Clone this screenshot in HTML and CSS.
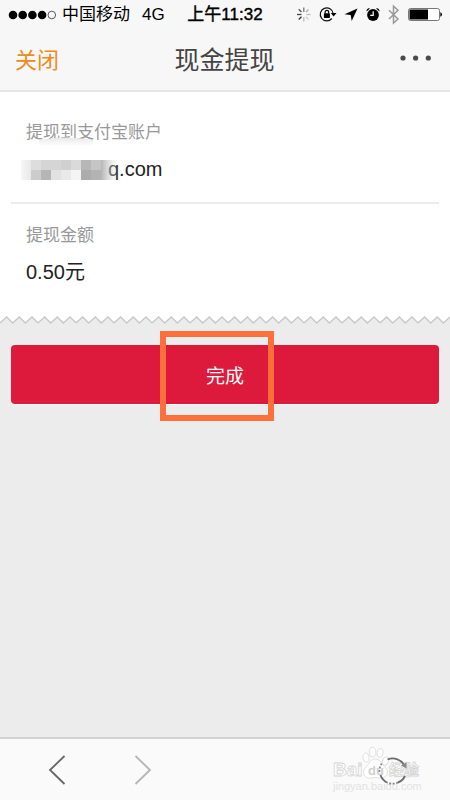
FILE: index.html
```html
<!DOCTYPE html>
<html lang="zh-CN">
<head>
<meta charset="utf-8">
<meta name="viewport" content="width=device-width, initial-scale=1">
<title>现金提现</title>
<link rel="stylesheet" href="styles.css">
</head>
<body>
<div class="screen">
  <div class="status">
    <div class="status-left">
      <svg class="signal" width="48" height="12" viewBox="0 0 48 12" aria-hidden="true">
        <circle cx="5" cy="6" r="4.3"/><circle cx="14.7" cy="6" r="4.3"/><circle cx="24.4" cy="6" r="4.3"/><circle cx="34.1" cy="6" r="4.3"/>
        <circle cx="43.8" cy="6" r="3.8" fill="none" stroke="#333" stroke-width=".8"/>
      </svg>
      <span class="carrier">中国移动</span>
      <span>4G</span>
    </div>
    <span class="clock">上午11:32</span>
    <svg class="status-icons" width="148" height="22" viewBox="294 4 148 22" aria-hidden="true">
      <g stroke-width="1.3" fill="none">
        <path d="M303.800 7.500v4.500" stroke="#777"/><path d="M306 12l2.500-2.500" stroke="#aaa"/><path d="M306.500 14.500h4" stroke="#bbb"/><path d="M306 17l2.500 2.500" stroke="#ccc"/><path d="M303.800 17v4.500" stroke="#bbb"/><path d="M301.500 16.700l-2.800 2.800" stroke="#333"/><path d="M297 14.500h4.500" stroke="#444"/><path d="M301.500 12l-2.800-2.800" stroke="#555"/>
      </g>
      <path d="M331.800 18.500a6.500 6.500 0 1 1 1.400-5" fill="none" stroke="#111" stroke-width="1.200"/>
      <path d="M330.800 13h5.700l-2.900 3.400z"/>
      <rect x="323.900" y="13.200" width="6" height="4.800" rx=".6"/><path d="M325.100 13.500v-1.300a1.800 1.800 0 0 1 3.600 0v1.300" fill="none" stroke="#000" stroke-width="1.200"/>
      <path d="M357.500 8.500l-5.800 12.500-1-6-6.200-.8z"/>
      <circle cx="373" cy="15" r="5.900"/><path d="M366.600 11.500a2.500 2.500 0 0 1 3.400-3zM379.400 11.500a2.500 2.500 0 0 0-3.400-3z"/>
      <path d="M373.200 11.300v4h-3" fill="none" stroke="#fff" stroke-width="1.200"/>
      <path d="M389 10.200l9 8.800-4.500 4V6.200l4.500 4-9 8.800" fill="none" stroke="#999" stroke-width="1.500"/>
      <rect x="408.500" y="8.500" width="31" height="12" rx="2" fill="#fff" stroke="#777"/>
      <rect x="409.500" y="9.500" width="18.500" height="10"/><path d="M440.300 12.300q1.700.3 1.700 2.200t-1.700 2.200z"/>
    </svg>
  </div>
  <header class="header">
    <a class="close" href="#">关闭</a>
    <h1>现金提现</h1>
    <button class="more" type="button" aria-label="更多">
      <svg width="34" height="8" viewBox="0 0 34 8" fill="#4a4a4a"><circle cx="3" cy="4" r="2.600"/><circle cx="15.600" cy="4" r="2.600"/><circle cx="28.300" cy="4" r="2.600"/></svg>
    </button>
  </header>
  <main>
    <dl class="receipt">
      <div class="row account">
        <dt>提现到支付宝账户</dt>
        <dd>q.com</dd>
        <svg class="mosaic" width="104" height="54" viewBox="0 0 104 54" aria-hidden="true">
          <defs>
            <linearGradient id="fade"><stop offset="0" stop-color="#fff" stop-opacity=".6"/><stop offset=".1" stop-color="#fff" stop-opacity="0"/><stop offset="1" stop-color="#fff" stop-opacity="0"/></linearGradient>
            <linearGradient id="edge"><stop offset="0" stop-color="#b5b5b5"/><stop offset="1" stop-color="#ddd" stop-opacity="0"/></linearGradient>
            <linearGradient id="smudge" x1="0" y1="1" x2="0" y2="0"><stop offset="0" stop-color="#fff"/><stop offset="1" stop-color="#e8e8e8"/></linearGradient>
          </defs>
          <path d="M18 14q28-5 54 0v6H18z" fill="url(#smudge)"/>
          <g shape-rendering="crispEdges">
            <path d="M0 34h10v10H0z" fill="#e9e9e9"/><path d="M10 34h10v10H10z" fill="#ddd"/><path d="M20 34h20v10H20z" fill="#d5d5d5"/><path d="M40 34h10v10H40z" fill="#d0d0d0"/><path d="M50 34h10v10H50z" fill="#dadada"/><path d="M60 34h10v10H60z" fill="#b7b7b7"/><path d="M70 34h10v10H70z" fill="#c5c5c5"/>
            <path d="M0 44h10v10H0z" fill="#e9e9e9"/><path d="M10 44h10v10H10z" fill="#ccc"/><path d="M20 44h10v10H20z" fill="#b5b5b5"/><path d="M30 44h10v10H30z" fill="#e1e1e1"/><path d="M40 44h10v10H40z" fill="#e9e9e9"/><path d="M50 44h10v10H50z" fill="#f4f4f4"/><path d="M60 44h10v10H60z" fill="#acacac"/><path d="M70 44h10v10H70z" fill="#b3b3b3"/>
          </g>
          <path d="M80 34h18v20H80z" fill="url(#edge)"/>
          <path d="M0 34h98v20H0z" fill="url(#fade)"/>
        </svg>
      </div>
      <div class="row">
        <dt>提现金额</dt>
        <dd>0.50元</dd>
      </div>
    </dl>
    <svg class="teeth" width="100%" height="8" aria-hidden="true">
      <defs><pattern id="zigzag" width="38" height="8" patternUnits="userSpaceOnUse">
        <path d="M0 0H38V7L32 1 25.330 7 19.330 1 12.670 7 6.670 1 0 7z" fill="#fff"/>
        <path d="M0 7L6.670 1 12.670 7 19.330 1 25.330 7 32 1 38 7" fill="none" stroke="#c8c8c8" stroke-width="1.400"/>
      </pattern></defs>
      <rect width="100%" height="8" fill="url(#zigzag)"/>
    </svg>
    <div class="action">
      <button class="done" type="button">完成</button>
      <span class="highlight"></span>
    </div>
  </main>
  <nav class="toolbar">
    <div class="history">
      <button type="button" aria-label="后退"><svg width="18" height="32" viewBox="0 0 18 32"><path d="M16.500 2L2 16l14.500 14" fill="none" stroke="#666" stroke-width="1.800"/></svg></button>
      <button type="button" aria-label="前进"><svg width="18" height="32" viewBox="0 0 18 32"><path d="M1.500 2L16 16 1.500 30" fill="none" stroke="#b5b5b5" stroke-width="1.800"/></svg></button>
    </div>
    <button class="reload" type="button" aria-label="刷新">
      <svg width="90" height="48" viewBox="0 0 90 48">
        <g fill="#fff" stroke="#ddd" stroke-width=".9">
          <ellipse cx="34" cy="11.500" rx="3" ry="4.500" transform="rotate(-8 34 11.500)"/><ellipse cx="40.500" cy="6" rx="3.300" ry="4.800"/><ellipse cx="48" cy="7" rx="3" ry="4.600" transform="rotate(12 48 7)"/><ellipse cx="53.500" cy="15" rx="3" ry="4.200" transform="rotate(25 53.500 15)"/>
          <path d="M43 13c-5 0-6 5-9 8-5 5-2 12 5 11q4-1 8 0c8 1 11-6 6-11-4-4-5-8-10-8z"/>
        </g>
        <g class="watermark"><text x="1" y="30" font-size="19">Bai</text><text x="57" y="29" font-size="15">经验</text></g>
        <text class="watermark-du" x="36" y="29">du</text>
        <text class="watermark-url" x="1" y="44">jingyan.baidu.com</text>
        <path d="M55.500 13.500A13 13 0 0 1 72 19M73 30A13 13 0 0 1 66 36.500M55 36.500A13 13 0 0 1 48.500 29" fill="none" stroke="#6c6c6c" stroke-width="1.900"/>
        <path d="M66 36.500A13 13 0 0 1 55 36.500M47.500 26A13 13 0 0 1 50 17" fill="none" stroke="#888" stroke-width="1.800" stroke-dasharray="2 1.500"/>
        <path d="M69 19.500l5.500-3v6z" fill="#888"/>
      </svg>
    </button>
  </nav>
</div>
</body>
</html>
```

FILE: styles.css
```css
* {
  box-sizing: border-box;
}

body {
  margin: 0;
  background: #ececec;
  color: #222;
  font-family: "Liberation Sans", "Noto Sans CJK SC", sans-serif;
}

button {
  padding: 0;
  border: 0;
  background: none;
  font: inherit;
  cursor: pointer;
}

svg {
  display: block;
}

.screen {
  display: flex;
  flex-direction: column;
  min-height: 100vh;
}

.status,
.header {
  display: grid;
  grid-template-columns: 1fr auto 1fr;
  align-items: center;
  background: #f7f7f7;
}

.status {
  height: 30px;
  padding: 0 8px;
  color: #000;
  font-size: 17px;
  line-height: 30px;
}

.status-left {
  display: flex;
  align-items: center;
  white-space: nowrap;
}

.signal {
  margin-right: 6px;
}

.carrier {
  margin-right: 12px;
}

.clock {
  -webkit-text-stroke: 0.4px;
}

.status-icons {
  justify-self: end;
}

.header {
  height: 62px;
  padding: 0 16px 4px 15px;
  border-bottom: 2px solid #e6e6e6;
}

.close {
  color: #ef8b18;
  font-size: 22px;
  text-decoration: none;
}

h1 {
  margin: 0;
  color: #444;
  font-size: 25px;
  font-weight: 400;
}

.more {
  justify-self: end;
}

main {
  flex: 1;
}

.receipt {
  margin: 0;
  padding: 0 11px;
  background: #fff;
}

.row {
  padding: 28px 15px 18px;
}

.account {
  position: relative;
  border-bottom: 2px solid #ececec;
}

.row + .row {
  padding: 19px 15px 29px;
}

dt {
  color: #999;
  font-size: 17px;
  line-height: 26px;
}

dd {
  margin: 8px 0 0;
  font-size: 20px;
  line-height: 30px;
}

.account dd {
  padding-left: 82px;
}

.mosaic {
  position: absolute;
  top: 34px;
  left: 10px;
}

.action {
  position: relative;
  padding: 21px 11px;
}

.done {
  display: block;
  width: 100%;
  height: 59px;
  border-radius: 4px;
  background: #de1a3c;
  box-shadow: 0 1px #fff;
  color: #fff;
  font-size: 19px;
}

.highlight {
  position: absolute;
  top: 7px;
  left: calc(50% - 65px);
  width: 114px;
  height: 90px;
  border: 6px solid #ff6f3c;
  pointer-events: none;
}

.toolbar {
  display: flex;
  align-items: center;
  justify-content: space-between;
  height: 63px;
  padding: 0 28px 0 48px;
  border-top: 2px solid #d2d2d2;
  background: #fafafa;
}

.history {
  display: flex;
  gap: 68px;
}

.watermark {
  fill: #fff;
  stroke: #d5d5d5;
  stroke-width: 0.8px;
  font-weight: 700;
}

.watermark-du {
  fill: #d0d0d0;
  font-size: 13px;
  font-weight: 700;
}

.watermark-url {
  fill: #e2e2e2;
  font-size: 11px;
}
```
